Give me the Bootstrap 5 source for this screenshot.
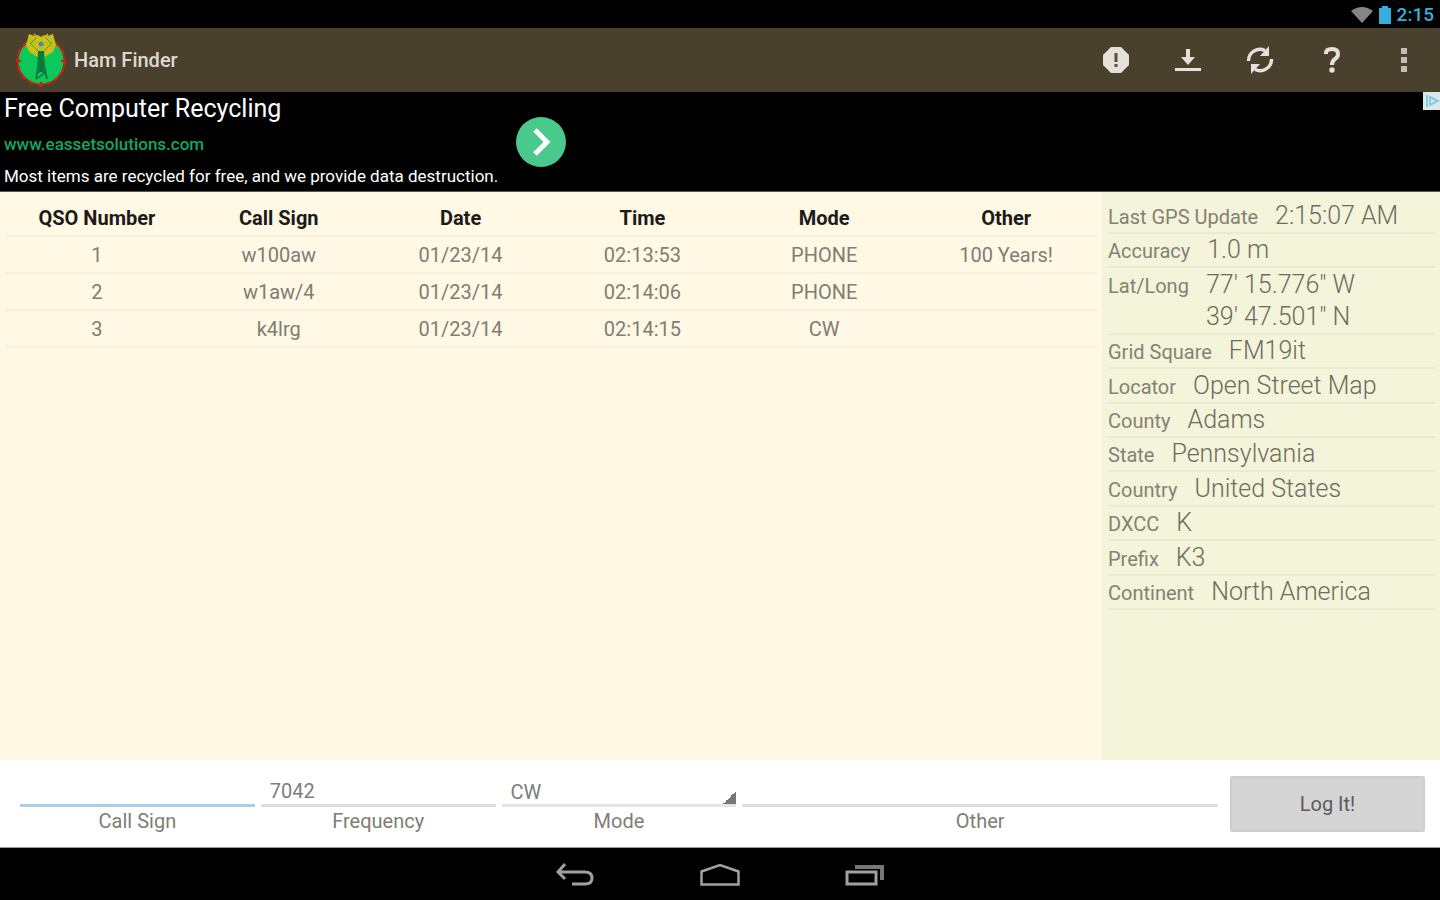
<!DOCTYPE html>
<html lang="en">
<head>
<meta charset="utf-8">
<meta name="viewport" content="width=device-width, initial-scale=1">
<title>Ham Finder</title>
<link href="https://cdn.jsdelivr.net/npm/bootstrap@5.3.0/dist/css/bootstrap.min.css" rel="stylesheet">
<style>
body { font-family: Roboto, "Liberation Sans", sans-serif; font-size: 20px; line-height: 24px; color: #807d74; background: #fff; }
svg { display: block; }
.status-bar { height: 28px; background: #000; color: #35aede; font-size: 19px; font-weight: 500; padding: 2px 6px 0 0; }
.action-bar { height: 64px; background: #4a402e; color: #e4e0da; padding-left: 16px; }
.app-title { font-size: 20px; font-weight: 500; color: #dedad2; }
.action-btn { width: 72px; height: 64px; color: #e4e0da; border: 0; border-radius: 0; }
.ad-banner { height: 100px; background: #000; color: #fff; border-bottom: 1px solid #555; }
.ad-copy { padding-left: 4px; width: 516px; }
.ad-title { font-size: 25px; line-height: 34px; font-weight: 400; }
.ad-link { font-size: 17px; line-height: 36px; color: #10a765; font-weight: 500; }
.ad-text { font-size: 17px; line-height: 29px; font-weight: 400; white-space: nowrap; }
.log-pane { background: #fef8e5; padding: 7px 5px 0 6px; }
.log-table { table-layout: fixed; width: 100%; text-align: center; }
.log-table th, .log-table td { height: 37px; padding: 1px 0 0; border-bottom: 2px solid #f5efde; }
.log-table thead th { color: #1c1b18; font-weight: 700; }
.gps-pane { width: 338px; background: #f3f4da; padding: 8px 5px 0 6px; color: #6d6c60; }
.gps-list { display: grid; min-height: 410px; align-content: space-between; }
.gps-row { border-bottom: 2px solid #e9ead1; gap: 17px; }
.gps-row dt { font-weight: 400; color: #838275; }
.gps-row dd { font-size: 25px; line-height: 32px; font-weight: 300; }
.entry-form { height: 88px; padding: 16px 15px 0 17px; border-bottom: 1px solid #999; }
.entry-grid { display: grid; grid-template-columns: 1fr 1fr 1fr 2fr; }
.entry-field { padding: 0 3px; text-align: center; line-height: 28px; }
.line-input { display: block; width: 100%; height: 31px; padding: 2px 9px 0; border: 0; border-bottom: 3px solid #dedede; border-radius: 0; background: transparent; color: #7d7d7d; outline: 0; appearance: none; }
.line-input.is-current { border-bottom-color: #a9cfeb; }
.spinner-field { border-bottom-color: #e4e4e4; background: linear-gradient(135deg, transparent 50%, #777 50%) right bottom / 13px 13px no-repeat; }
.log-btn { width: 195px; height: 56px; background: #d5d5d5; color: #5c5c5c; border: 2px solid #cecece; border-radius: 2px; font-size: 20px; margin-left: 9px; }
.nav-keys { height: 52px; background: #000; color: #a0a0a0; gap: 72px; }
.nav-keys button { width: 73px; height: 52px; padding: 2px 0 0; color: inherit; }
</style>
</head>
<body class="d-flex flex-column min-vh-100">
<div class="status-bar d-flex align-items-center justify-content-end">
  <svg width="22" height="18" viewBox="0 0 22 18" aria-hidden="true"><path d="M0 5Q11-3 22 5L11 17Z" fill="#858585"/></svg>
  <svg class="mx-1" width="16" height="18" viewBox="0 0 16 18" aria-hidden="true"><path d="M2 2h3V0h6v2h3v16H2Z" fill="#35aede"/></svg>
  <span>2:15</span>
</div>
<header class="action-bar d-flex align-items-center">
  <svg width="50" height="58" viewBox="0 0 50 58" role="img" aria-label="Ham Finder logo">
    <circle cx="25" cy="30" r="23.5" fill="#0bc85b" stroke="#a92a12" stroke-width="2"/>
    <circle cx="25" cy="30" r="23.5" fill="none" stroke="#e01b12" stroke-width="2" stroke-dasharray="4 5"/>
    <path d="M0 30h5M45 30h5M25 51v5" stroke="#d21a10" stroke-width="2"/>
    <path d="M10 14 13 3l5 2 4-1 3 2 3-2 4 1 5-2 3 11-3 7-12 7-12-7Z" fill="#b7c51c"/>
    <path d="M13 4 37 20M37 4 13 20M11 12l14 13 14-13M18 3l7 8 7-8M16 20l9-8 9 8" fill="none" stroke="#e5b71a" stroke-width="1.500"/>
    <path d="M15 13l10 10 10-10M21 6l-7 7M29 6l7 7" fill="none" stroke="#4f9932"/>
    <circle cx="25" cy="13" r="2.500" fill="#478f9c"/>
    <path d="M24 24 20 48M26 24l5 24M22 30h6M21 37l8 5M29 37l-8 5M20 48l9-6" fill="none" stroke="#086b36" stroke-width="1.500"/>
    <path d="M22 20h6l1 19h-8Z" fill="#077b3a"/>
  </svg>
  <h1 class="app-title mb-0 ms-2">Ham Finder</h1>
  <nav class="d-flex ms-auto" aria-label="Actions">
    <button class="action-btn btn p-0 d-flex align-items-center justify-content-center" type="button" aria-label="Alert"><svg width="26" height="26" viewBox="0 0 26 26"><path d="M8 0h10l8 8v10l-8 8H8l-8-8V8Z" fill="currentColor"/><path d="M13 6v9M13 17v3" stroke="#5a5040" stroke-width="3"/></svg></button>
    <button class="action-btn btn p-0 d-flex align-items-center justify-content-center" type="button" aria-label="Download"><svg width="26" height="24" viewBox="0 0 26 24"><path d="M11 1h4v8h5l-7 8-7-8h5ZM0 20h26v3H0Z" fill="currentColor"/></svg></button>
    <button class="action-btn btn p-0 d-flex align-items-center justify-content-center" type="button" aria-label="Refresh"><svg width="28" height="28" viewBox="0 0 28 28"><path d="M2.500 15A11.500 11.500 0 0 1 19 4.500M25.500 13A11.500 11.500 0 0 1 9 23.500" fill="none" stroke="currentColor" stroke-width="3.400"/><path d="M23 0v10H14ZM5 28V18h9Z" fill="currentColor"/></svg></button>
    <button class="action-btn btn p-0 d-flex align-items-center justify-content-center" type="button" aria-label="Help"><svg width="16" height="26" viewBox="0 0 16 26"><path d="M2 7V6q0-4 6-4t6 5q0 3-3 5t-3 6" fill="none" stroke="currentColor" stroke-width="4"/><circle cx="8" cy="23" r="2.700" fill="currentColor"/></svg></button>
    <button class="action-btn btn p-0 d-flex align-items-center justify-content-center" type="button" aria-label="More options"><svg width="6" height="24" viewBox="0 0 6 24"><path d="M0 0h6v6H0ZM0 9h6v6H0ZM0 18h6v6H0Z" fill="#c2bdb4"/></svg></button>
  </nav>
</header>
<aside class="ad-banner d-flex align-items-start flex-shrink-0" aria-label="Advertisement">
  <div class="ad-copy">
    <div class="ad-title">Free Computer Recycling</div>
    <a class="ad-link d-block text-decoration-none" href="#">www.eassetsolutions.com</a>
    <div class="ad-text">Most items are recycled for free, and we provide data destruction.</div>
  </div>
  <a class="align-self-center" href="#" aria-label="Open advertisement"><svg width="50" height="50" viewBox="0 0 50 50"><circle cx="25" cy="25" r="25" fill="#49c98b"/><path d="M19 13 31 25 19 37" fill="none" stroke="#fff" stroke-width="5"/></svg></a>
  <svg class="ms-auto" width="17" height="18" viewBox="0 0 17 18" aria-label="AdChoices"><path d="M0 0h17v18H0Z" fill="#dbe9ec"/><path d="M4 3v12M7 5l8 4-8 4Z" fill="none" stroke="#85cbdc" stroke-width="2"/></svg>
</aside>
<main class="d-flex flex-grow-1">
  <section class="log-pane flex-grow-1" aria-label="Contact log">
    <table class="log-table">
      <thead><tr><th>QSO Number</th><th>Call Sign</th><th>Date</th><th>Time</th><th>Mode</th><th>Other</th></tr></thead>
      <tbody>
        <tr><td>1</td><td>w100aw</td><td>01/23/14</td><td>02:13:53</td><td>PHONE</td><td>100 Years!</td></tr>
        <tr><td>2</td><td>w1aw/4</td><td>01/23/14</td><td>02:14:06</td><td>PHONE</td><td></td></tr>
        <tr><td>3</td><td>k4lrg</td><td>01/23/14</td><td>02:14:15</td><td>CW</td><td></td></tr>
      </tbody>
    </table>
  </section>
  <aside class="gps-pane flex-shrink-0" aria-label="Location">
    <dl class="gps-list mb-0">
      <div class="gps-row d-flex align-items-baseline"><dt>Last GPS Update</dt><dd class="mb-0">2:15:07 AM</dd></div>
      <div class="gps-row d-flex align-items-baseline"><dt>Accuracy</dt><dd class="mb-0">1.0 m</dd></div>
      <div class="gps-row d-flex align-items-baseline"><dt>Lat/Long</dt><dd class="mb-0">77' 15.776" W<br>39' 47.501" N</dd></div>
      <div class="gps-row d-flex align-items-baseline"><dt>Grid Square</dt><dd class="mb-0">FM19it</dd></div>
      <div class="gps-row d-flex align-items-baseline"><dt>Locator</dt><dd class="mb-0">Open Street Map</dd></div>
      <div class="gps-row d-flex align-items-baseline"><dt>County</dt><dd class="mb-0">Adams</dd></div>
      <div class="gps-row d-flex align-items-baseline"><dt>State</dt><dd class="mb-0">Pennsylvania</dd></div>
      <div class="gps-row d-flex align-items-baseline"><dt>Country</dt><dd class="mb-0">United States</dd></div>
      <div class="gps-row d-flex align-items-baseline"><dt>DXCC</dt><dd class="mb-0">K</dd></div>
      <div class="gps-row d-flex align-items-baseline"><dt>Prefix</dt><dd class="mb-0">K3</dd></div>
      <div class="gps-row d-flex align-items-baseline"><dt>Continent</dt><dd class="mb-0">North America</dd></div>
    </dl>
  </aside>
</main>
<form class="entry-form d-flex align-items-start bg-white">
  <div class="entry-grid flex-grow-1">
    <div class="entry-field"><input class="line-input is-current" id="call" type="text"><label for="call">Call Sign</label></div>
    <div class="entry-field"><input class="line-input" id="freq" type="text" value="7042"><label for="freq">Frequency</label></div>
    <div class="entry-field"><select class="line-input spinner-field" id="mode"><option>CW</option><option>PHONE</option></select><label for="mode">Mode</label></div>
    <div class="entry-field"><input class="line-input" id="other" type="text"><label for="other">Other</label></div>
  </div>
  <button class="log-btn btn p-0 flex-shrink-0" type="button">Log It!</button>
</form>
<nav class="nav-keys d-flex justify-content-center" aria-label="System">
  <button class="btn d-flex align-items-center justify-content-center" type="button" aria-label="Back"><svg width="38" height="24" viewBox="0 0 38 24"><path d="M9 1 2 9l7 7M3 9h26q7 0 7 6t-7 6H16" fill="none" stroke="currentColor" stroke-width="3"/></svg></button>
  <button class="btn d-flex align-items-center justify-content-center" type="button" aria-label="Home"><svg width="40" height="24" viewBox="0 0 40 24"><path d="M1.500 21.500V8.500L20 2l18.500 6.500v13Z" fill="none" stroke="currentColor" stroke-width="2.500"/></svg></button>
  <button class="btn d-flex align-items-center justify-content-center" type="button" aria-label="Recent apps"><svg width="40" height="24" viewBox="0 0 40 24"><path d="M2 9h29v12H2Z" fill="none" stroke="currentColor" stroke-width="3"/><path d="M10 4h27v13" fill="none" stroke="#777" stroke-width="4"/></svg></button>
</nav>
<script src="https://cdn.jsdelivr.net/npm/bootstrap@5.3.0/dist/js/bootstrap.bundle.min.js"></script>
</body>
</html>
